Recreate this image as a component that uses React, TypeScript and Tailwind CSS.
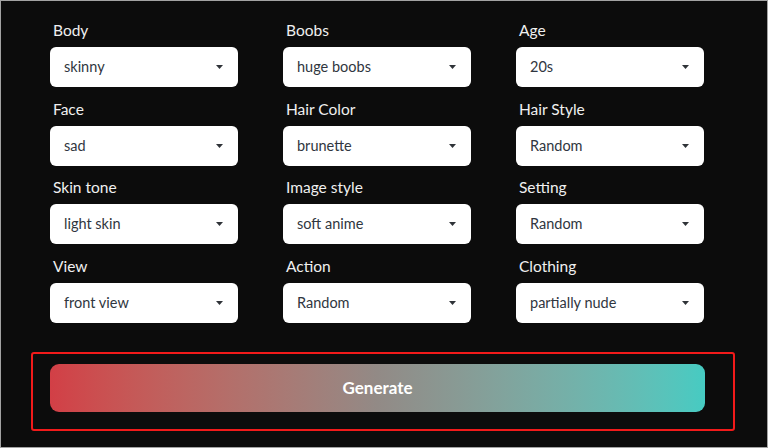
import React from "react";

type Field = { label: string; value: string };

const fields: Field[] = [
  { label: "Body", value: "skinny" },
  { label: "Boobs", value: "huge boobs" },
  { label: "Age", value: "20s" },
  { label: "Face", value: "sad" },
  { label: "Hair Color", value: "brunette" },
  { label: "Hair Style", value: "Random" },
  { label: "Skin tone", value: "light skin" },
  { label: "Image style", value: "soft anime" },
  { label: "Setting", value: "Random" },
  { label: "View", value: "front view" },
  { label: "Action", value: "Random" },
  { label: "Clothing", value: "partially nude" },
];

const Select = ({ label, value }: Field) => (
  <div className="flex flex-col">
    <div className="h-[20px] leading-[20px] mb-[7px] pl-[3px] text-[15.5px] text-[#f0f0f0]">{label}</div>
    <div className="h-[40px] rounded-[6px] bg-white flex items-center justify-between pl-[14px] pr-[15px]">
      <span className="text-[14.5px] text-[#303640]">{value}</span>
      <svg width="7" height="4" viewBox="0 0 7 4">
        <path d="M0 0 H7 L3.5 4 Z" fill="#2f3338" />
      </svg>
    </div>
  </div>
);

export default function App() {
  return (
    <div
      className="w-[768px] h-[448px] border border-[#a3a3a3] bg-[#0c0c0c] overflow-hidden"
      style={{ fontFamily: "Lato, 'Noto Sans', sans-serif" }}
    >
      <div className="grid grid-cols-[188px_188px_188px] gap-x-[45px] gap-y-[11.5px] pl-[49px] pt-[19px]">
        {fields.map((f) => (
          <Select key={f.label} {...f} />
        ))}
      </div>
      <div className="ml-[30px] mt-[29px] w-[704px] h-[79px] border-2 border-[#f21a1a] rounded-[3px] pl-[17px] pt-[10px]">
        <button className="w-[655px] h-[48px] rounded-[9px] bg-gradient-to-r from-[#d23f46] via-[#928a86] to-[#46cbc2] text-white font-bold text-[17px]">
          Generate
        </button>
      </div>
    </div>
  );
}
